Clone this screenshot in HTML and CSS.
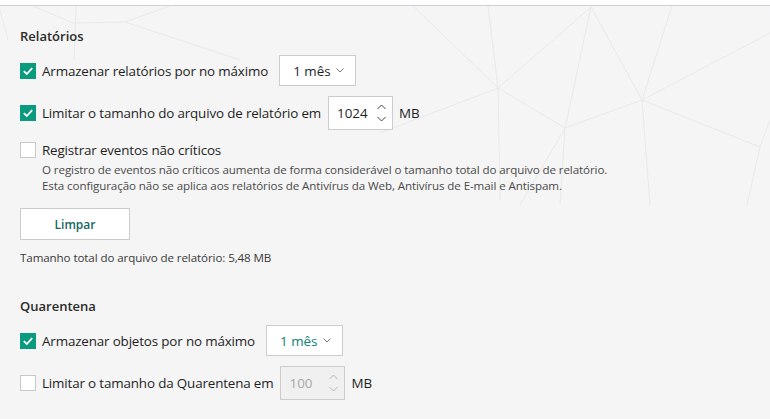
FILE: index.html
```html
<!DOCTYPE html>
<html lang="pt">
<head>
    <meta charset="UTF-8">
    <meta name="viewport" content="width=device-width, initial-scale=1.0">
    <title>Relatórios e Quarentena</title>
    <link rel="stylesheet" href="styles.css">
</head>
<body>
    <!-- Obere Linie -->
    <div class="topbar"></div>

    <!-- Hintergrundmuster -->
    <svg class="bg-lines" width="770" height="419" viewBox="0 0 770 419">
        <g stroke="#e9e9e9" stroke-width="1" fill="none">
            <line x1="0" y1="10" x2="8" y2="40"/>
            <line x1="33" y1="6" x2="73" y2="23"/>
            <line x1="76" y1="6" x2="74" y2="60"/>
            <line x1="73" y1="23" x2="125" y2="22"/>
            <line x1="125" y1="22" x2="170" y2="6"/>
            <line x1="125" y1="22" x2="240" y2="60"/>
            <line x1="413" y1="6" x2="498" y2="88"/>
            <line x1="488" y1="6" x2="498" y2="88"/>
            <line x1="591" y1="7" x2="498" y2="88"/>
            <line x1="591" y1="7" x2="565" y2="128"/>
            <line x1="591" y1="7" x2="642" y2="100"/>
            <line x1="672" y1="6" x2="642" y2="100"/>
            <line x1="770" y1="33" x2="642" y2="100"/>
            <line x1="642" y1="100" x2="760" y2="147"/>
            <line x1="498" y1="88" x2="565" y2="128"/>
            <line x1="565" y1="128" x2="642" y2="100"/>
            <line x1="380" y1="133" x2="498" y2="88"/>
            <line x1="565" y1="128" x2="520" y2="205"/>
            <line x1="565" y1="128" x2="560" y2="205"/>
            <line x1="760" y1="147" x2="747" y2="205"/>
            <line x1="760" y1="147" x2="770" y2="120"/>
            <line x1="498" y1="88" x2="500" y2="200"/>
            <line x1="642" y1="100" x2="650" y2="205"/>
        </g>
    </svg>

    <div class="content">
        <!-- Relatórios -->
        <h2 class="section-title">Relatórios</h2>

        <div class="row">
            <span class="checkbox checked"><svg width="16" height="16" viewBox="0 0 16 16"><path d="M3.8 8.2 L6.8 11 L12.2 5.2" stroke="#fff" stroke-width="1.8" fill="none"/></svg></span>
            <span class="label">Armazenar relatórios por no máximo</span>
            <div class="select">
                <span>1 mês</span>
                <svg width="8" height="5" viewBox="0 0 8 5"><path d="M0.5 0.5 L4 4 L7.5 0.5" stroke="#777" stroke-width="1" fill="none"/></svg>
            </div>
        </div>

        <div class="row">
            <span class="checkbox checked"><svg width="16" height="16" viewBox="0 0 16 16"><path d="M3.8 8.2 L6.8 11 L12.2 5.2" stroke="#fff" stroke-width="1.8" fill="none"/></svg></span>
            <span class="label">Limitar o tamanho do arquivo de relatório em</span>
            <div class="spin">
                <span class="spin-value">1024</span>
                <span class="spin-arrows">
                    <svg width="9" height="6" viewBox="0 0 9 6"><path d="M0.5 5 L4.5 1 L8.5 5" stroke="#444" stroke-width="1" fill="none"/></svg>
                    <svg width="9" height="6" viewBox="0 0 9 6"><path d="M0.5 1 L4.5 5 L8.5 1" stroke="#444" stroke-width="1" fill="none"/></svg>
                </span>
            </div>
            <span class="unit">MB</span>
        </div>

        <div class="row row-plain">
            <span class="checkbox"></span>
            <span class="label">Registrar eventos não críticos</span>
        </div>
        <p class="description">
            O registro de eventos não críticos aumenta de forma considerável o tamanho total do arquivo de relatório.<br>
            Esta configuração não se aplica aos relatórios de Antivírus da Web, Antivírus de E-mail e Antispam.
        </p>

        <button class="clear-button">Limpar</button>

        <p class="total">Tamanho total do arquivo de relatório: 5,48 MB</p>

        <!-- Quarentena -->
        <h2 class="section-title second">Quarentena</h2>

        <div class="row">
            <span class="checkbox checked"><svg width="16" height="16" viewBox="0 0 16 16"><path d="M3.8 8.2 L6.8 11 L12.2 5.2" stroke="#fff" stroke-width="1.8" fill="none"/></svg></span>
            <span class="label">Armazenar objetos por no máximo</span>
            <div class="select active">
                <span>1 mês</span>
                <svg width="8" height="5" viewBox="0 0 8 5"><path d="M0.5 0.5 L4 4 L7.5 0.5" stroke="#777" stroke-width="1" fill="none"/></svg>
            </div>
        </div>

        <div class="row">
            <span class="checkbox"></span>
            <span class="label">Limitar o tamanho da Quarentena em</span>
            <div class="spin disabled">
                <span class="spin-value">100</span>
                <span class="spin-arrows">
                    <svg width="9" height="6" viewBox="0 0 9 6"><path d="M0.5 5 L4.5 1 L8.5 5" stroke="#b5b5b5" stroke-width="1" fill="none"/></svg>
                    <svg width="9" height="6" viewBox="0 0 9 6"><path d="M0.5 1 L4.5 5 L8.5 1" stroke="#b5b5b5" stroke-width="1" fill="none"/></svg>
                </span>
            </div>
            <span class="unit">MB</span>
        </div>
    </div>
</body>
</html>
```

FILE: styles.css
```css
/* Grundlegendes Styling */
* {
    margin: 0;
    padding: 0;
    box-sizing: border-box;
}

body {
    position: relative;
    width: 770px;
    height: 419px;
    overflow: hidden;
    background-color: #f5f5f5;
    font-family: "Open Sans", "Noto Sans", sans-serif;
    color: #1f1f1f;
}

.topbar {
    height: 6px;
    background-color: #fff;
    border-bottom: 1px solid #c9d1dc;
}

.bg-lines {
    position: absolute;
    top: 0;
    left: 0;
    z-index: 0;
}

.content {
    position: relative;
    z-index: 1;
    padding-left: 20px;
}

.section-title {
    margin-top: 21px;
    font-size: 13px;
    font-weight: 600;
    line-height: 18px;
    color: #2a2a2a;
}

.section-title.second {
    margin-top: 31px;
}

.row {
    display: flex;
    align-items: center;
    margin-top: 10px;
}

.row-plain {
    height: 20px;
}

.checkbox {
    display: flex;
    width: 16px;
    height: 16px;
    background-color: #fff;
    border: 1px solid #c8c8c8;
    flex-shrink: 0;
}

.checkbox.checked {
    background-color: #0a9a7d;
    border: none;
}

.label {
    margin-left: 6px;
    font-size: 13.4px;
    letter-spacing: -0.15px;
}

/* Auswahlfeld */
.select {
    display: flex;
    align-items: center;
    justify-content: space-between;
    width: 77px;
    height: 31px;
    margin-left: 11px;
    padding: 0 11px 0 13px;
    background-color: #fff;
    border: 1px solid #cccccc;
    font-size: 13.4px;
    flex-shrink: 0;
}

.select.active span {
    color: #0b7f73;
}

/* Zahlenfeld */
.spin {
    display: flex;
    align-items: center;
    justify-content: space-between;
    width: 65px;
    height: 34px;
    margin-left: 7px;
    padding: 0 6px 0 8px;
    background-color: #fff;
    border: 1px solid #cccccc;
    font-size: 13.4px;
    flex-shrink: 0;
}

.spin.disabled {
    background-color: #f0f0f0;
    color: #a8a8a8;
}

.spin-arrows {
    display: flex;
    flex-direction: column;
    gap: 6px;
}

.spin-arrows svg {
    display: block;
}

.unit {
    margin-left: 6px;
    font-size: 13.4px;
}

.description {
    margin-top: 2px;
    margin-left: 22px;
    font-size: 11.6px;
    line-height: 16px;
    color: #4a4a4a;
    letter-spacing: -0.1px;
}

.clear-button {
    display: block;
    width: 110px;
    height: 32px;
    margin-top: 14px;
    background-color: #fff;
    border: 1px solid #cccccc;
    font-family: "Open Sans", "Noto Sans", sans-serif;
    font-size: 12px;
    font-weight: 600;
    color: #14675f;
    cursor: pointer;
}

.total {
    margin-top: 10px;
    font-size: 11.6px;
    line-height: 16px;
    color: #3a3a3a;
    letter-spacing: -0.1px;
}
```
